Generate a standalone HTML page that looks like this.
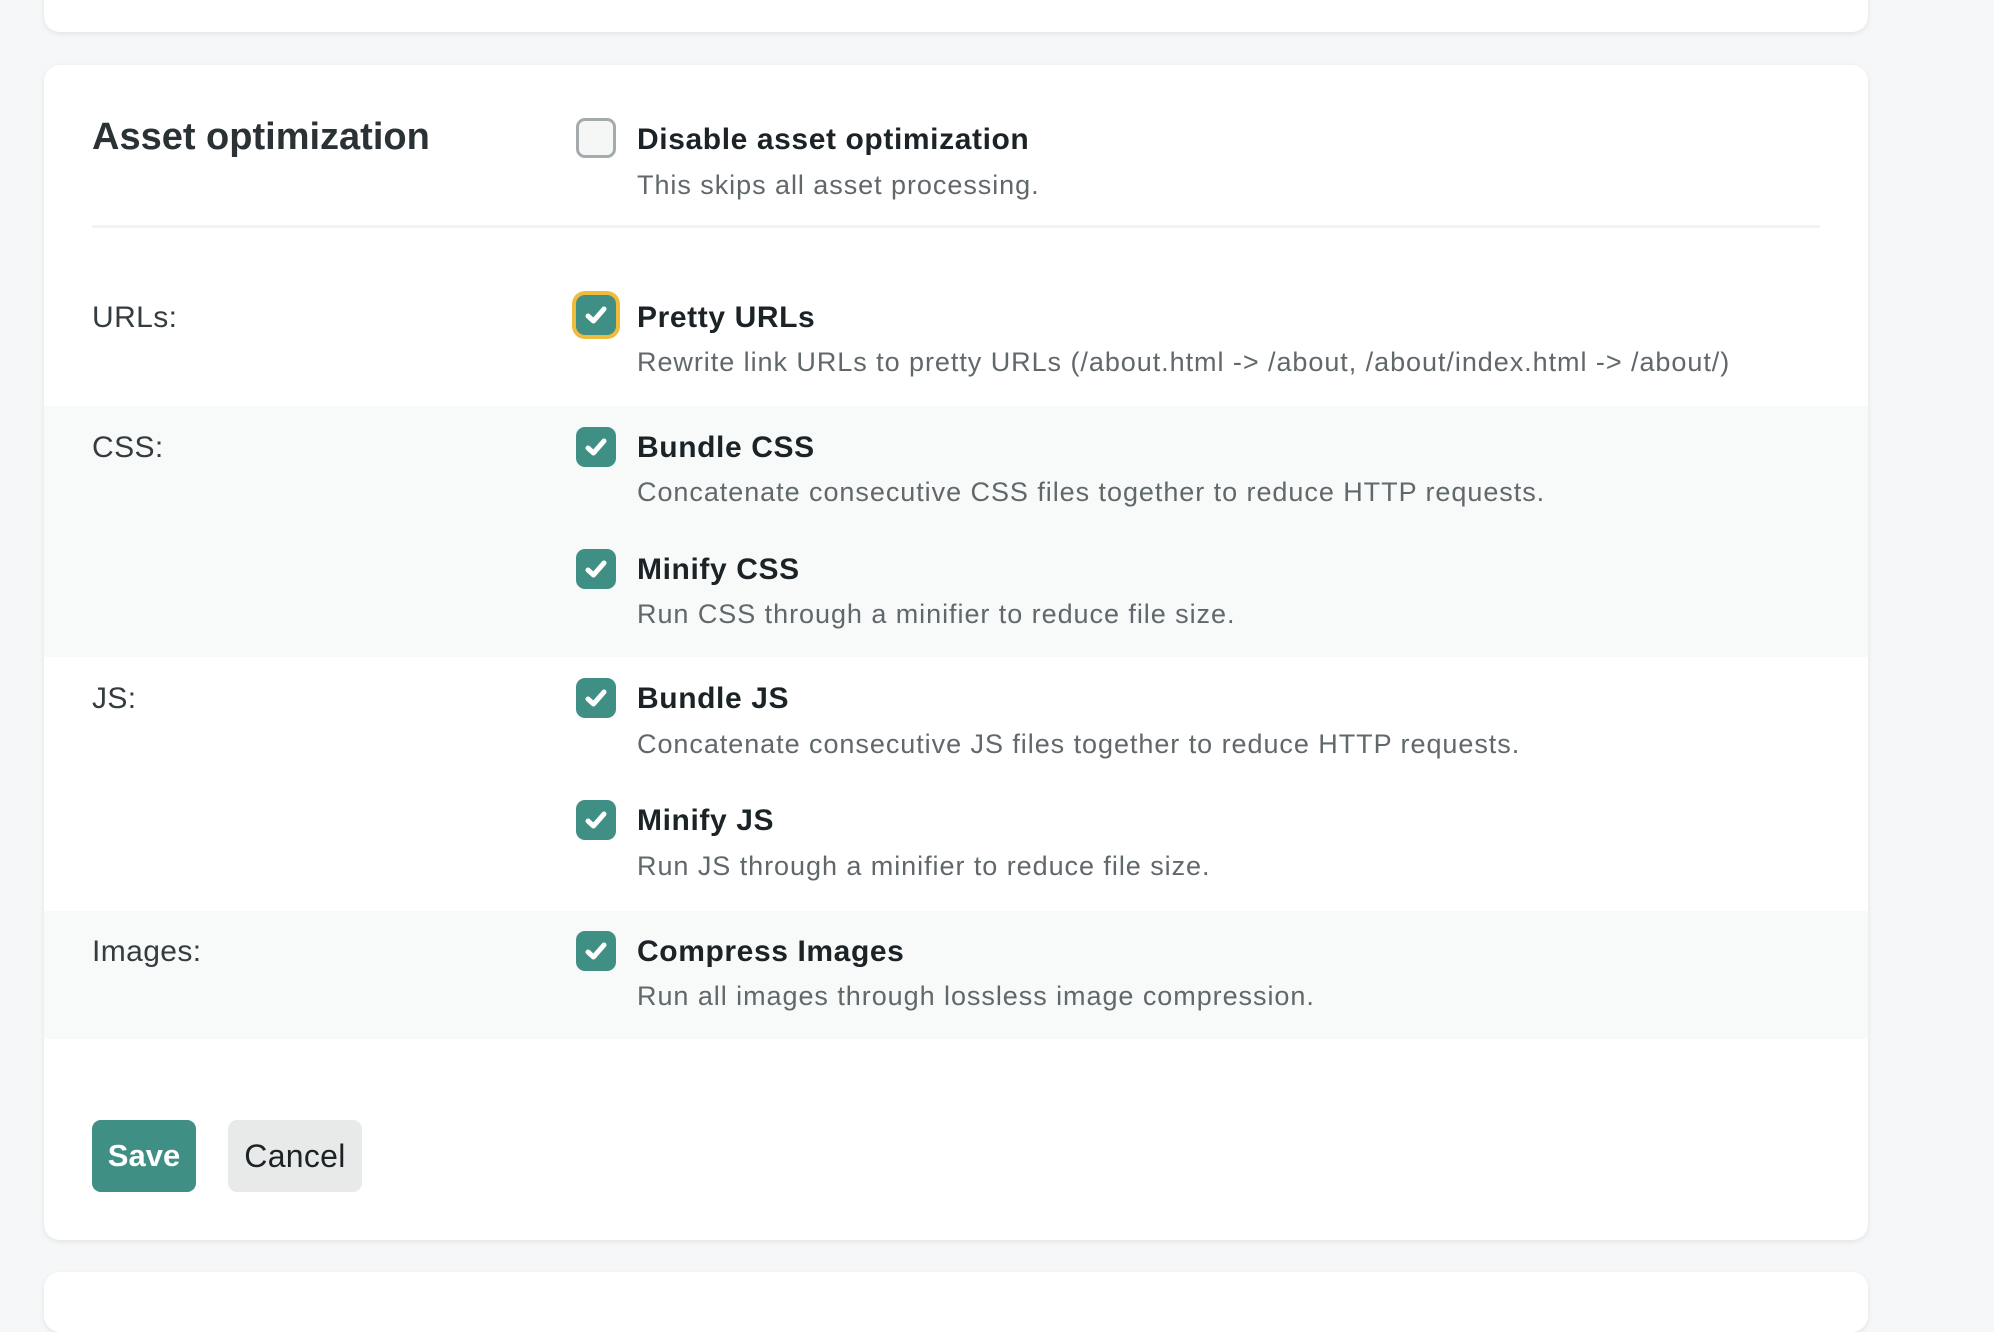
<!DOCTYPE html>
<html><head><meta charset="utf-8"><style>
*{margin:0;padding:0;box-sizing:border-box}
body{width:1994px;height:1306px;background:#f5f7f8;position:relative;overflow:hidden;font-family:"Liberation Sans",sans-serif}
.card{position:absolute;left:44px;width:1824px;background:#fff;border-radius:16px;box-shadow:0 2px 6px rgba(0,0,0,.08)}
.a{position:absolute;line-height:1;white-space:nowrap}
.h{font-size:38px;font-weight:bold;color:#2a3236;left:92px}
.l{font-size:30px;font-weight:bold;color:#1b2327;left:637px;letter-spacing:0.6px;margin-top:2px}
.d{font-size:27px;color:#60686b;left:637px;letter-spacing:0.95px}
.k{font-size:30px;color:#343c40;left:92px;letter-spacing:0.4px;margin-top:1px}
.band{position:absolute;left:44px;width:1824px;background:#f8fafa}
.cb{position:absolute;left:576px;width:40px;height:40px;border-radius:9px;background:#3f8f84}
.cb svg{position:absolute;left:0;top:0}
</style></head><body>
<div class="card" style="top:-20px;height:52px"></div>
<div class="card" style="top:65px;height:1175px"></div>
<div class="card" style="top:1272px;height:60px"></div>
<div class="band" style="top:406px;height:251px"></div>
<div class="band" style="top:911px;height:128px"></div>
<div style="position:absolute;left:92px;top:225px;width:1728px;height:3px;background:#f1f3f3"></div>

<div class="a h" style="top:118px">Asset optimization</div>
<div class="cb" style="top:118px;background:#f5f7f7;border:3px solid #a5aaad"></div>
<div class="a l" style="top:123px">Disable asset optimization</div>
<div class="a d" style="top:172px">This skips all asset processing.</div>

<div class="a k" style="top:302px">URLs:</div>
<div class="cb" style="top:295px;box-shadow:0 0 0 4px #f0bb3c"><svg width="40" height="40"><path d="M12 21l5.5 5L28 14" fill="none" stroke="#fff" stroke-width="5" stroke-linecap="round" stroke-linejoin="round"/></svg></div>
<div class="a l" style="top:301px">Pretty URLs</div>
<div class="a d" style="top:349px">Rewrite link URLs to pretty URLs (/about.html -&gt; /about, /about/index.html -&gt; /about/)</div>

<div class="a k" style="top:432px">CSS:</div>
<div class="cb" style="top:427px"><svg width="40" height="40"><path d="M12 21l5.5 5L28 14" fill="none" stroke="#fff" stroke-width="5" stroke-linecap="round" stroke-linejoin="round"/></svg></div>
<div class="a l" style="top:431px">Bundle CSS</div>
<div class="a d" style="top:479px">Concatenate consecutive CSS files together to reduce HTTP requests.</div>
<div class="cb" style="top:549px"><svg width="40" height="40"><path d="M12 21l5.5 5L28 14" fill="none" stroke="#fff" stroke-width="5" stroke-linecap="round" stroke-linejoin="round"/></svg></div>
<div class="a l" style="top:553px">Minify CSS</div>
<div class="a d" style="top:601px">Run CSS through a minifier to reduce file size.</div>

<div class="a k" style="top:683px">JS:</div>
<div class="cb" style="top:678px"><svg width="40" height="40"><path d="M12 21l5.5 5L28 14" fill="none" stroke="#fff" stroke-width="5" stroke-linecap="round" stroke-linejoin="round"/></svg></div>
<div class="a l" style="top:682px">Bundle JS</div>
<div class="a d" style="top:731px">Concatenate consecutive JS files together to reduce HTTP requests.</div>
<div class="cb" style="top:800px"><svg width="40" height="40"><path d="M12 21l5.5 5L28 14" fill="none" stroke="#fff" stroke-width="5" stroke-linecap="round" stroke-linejoin="round"/></svg></div>
<div class="a l" style="top:804px">Minify JS</div>
<div class="a d" style="top:853px">Run JS through a minifier to reduce file size.</div>

<div class="a k" style="top:936px">Images:</div>
<div class="cb" style="top:931px"><svg width="40" height="40"><path d="M12 21l5.5 5L28 14" fill="none" stroke="#fff" stroke-width="5" stroke-linecap="round" stroke-linejoin="round"/></svg></div>
<div class="a l" style="top:935px">Compress Images</div>
<div class="a d" style="top:983px">Run all images through lossless image compression.</div>

<div style="position:absolute;left:92px;top:1120px;width:104px;height:72px;border-radius:9px;background:#3f8f84;color:#fff;font-size:31px;font-weight:bold;line-height:72px;text-align:center">Save</div>
<div style="position:absolute;left:228px;top:1120px;width:134px;height:72px;border-radius:9px;background:#e8eaea;color:#1b2327;font-size:32px;line-height:72px;text-align:center;letter-spacing:0.3px">Cancel</div>
</body></html>
